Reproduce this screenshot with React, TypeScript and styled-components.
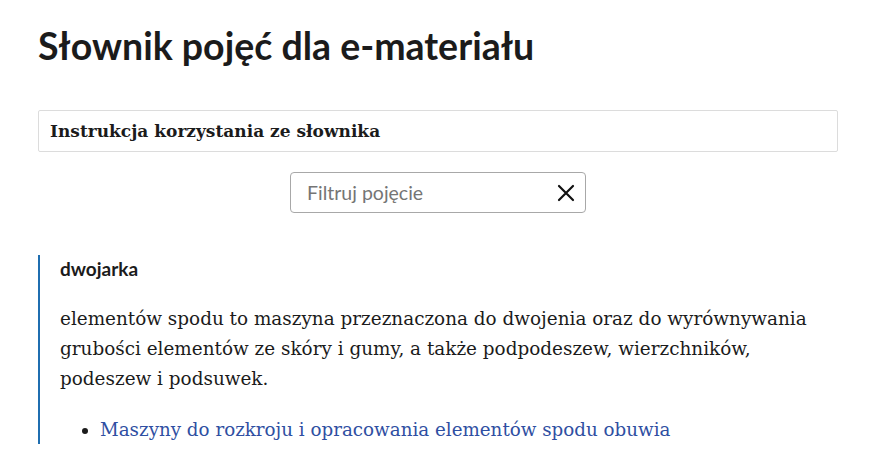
import styled, { createGlobalStyle } from "styled-components"

const GlobalStyle = createGlobalStyle`
  body {
    margin: 0;
    background: #fff;
    font-family: Lato, "Noto Sans", sans-serif;
    color: #1b1b1b;
  }
`

const Page = styled.div`
  width: 800px;
  padding: 20px 0 0 38px;
`

const Title = styled.h1`
  margin: 0;
  font-family: Lato, sans-serif;
  font-weight: 700;
  font-size: 37.5px;
  line-height: 52px;
  color: #1b1b1b;
`

const InstructionBar = styled.div`
  margin-top: 38px;
  height: 42px;
  box-sizing: border-box;
  border: 1px solid #dcdcdc;
  border-radius: 2px;
  display: flex;
  align-items: center;
  padding: 0 11px;
  font-family: "DejaVu Serif", serif;
  font-weight: 700;
  font-size: 17px;
  color: #1b1b1b;
`

const FilterRow = styled.div`
  display: flex;
  justify-content: center;
  margin-top: 20px;
`

const FilterBox = styled.label`
  width: 296px;
  height: 41px;
  box-sizing: border-box;
  border: 1px solid #a8a8a8;
  border-radius: 4px;
  display: flex;
  align-items: center;
  padding: 0 10px 0 16px;
`

const FilterInput = styled.input`
  flex: 1;
  min-width: 0;
  border: none;
  outline: none;
  font-family: Lato, sans-serif;
  font-size: 19.5px;
  color: #1b1b1b;
  padding: 0;
  &::placeholder {
    color: #757575;
  }
`

const ClearButton = styled.button`
  border: none;
  background: none;
  padding: 0;
  display: flex;
  cursor: pointer;
`

const Entry = styled.section`
  margin-top: 42px;
  border-left: 2px solid #1f6eb0;
  padding: 3px 0 0 20px;
  box-sizing: border-box;
`

const Term = styled.h3`
  margin: 0;
  font-family: Lato, sans-serif;
  font-weight: 700;
  font-size: 19px;
  line-height: 22px;
`

const Definition = styled.p`
  margin: 24px 0 0;
  font-family: "DejaVu Serif", serif;
  font-size: 18.4px;
  line-height: 30px;
  color: #1b1b1b;
`

const Links = styled.ul`
  margin: 22px 0 0;
  padding-left: 40px;
  font-family: "DejaVu Serif", serif;
  font-size: 18.3px;
  line-height: 28px;
`

const LinkItem = styled.li`
  &::marker {
    color: #1b1b1b;
  }
`

const Link = styled.a`
  color: #2f4fa2;
  text-decoration: none;
`

export default function App() {
  return (
    <>
      <GlobalStyle />
      <Page>
        <Title>Słownik pojęć dla e-materiału</Title>
        <InstructionBar>Instrukcja korzystania ze słownika</InstructionBar>
        <FilterRow>
          <FilterBox>
            <FilterInput placeholder="Filtruj pojęcie" />
            <ClearButton aria-label="Wyczyść">
              <svg width="18" height="18" viewBox="0 0 18 18">
                <path d="M2 2L16 16M16 2L2 16" stroke="#111" strokeWidth="2.2" strokeLinecap="round" />
              </svg>
            </ClearButton>
          </FilterBox>
        </FilterRow>
        <Entry>
          <Term>dwojarka</Term>
          <Definition>
            elementów spodu to maszyna przeznaczona do dwojenia oraz do wyrównywania grubości
            elementów ze skóry i gumy, a także podpodeszew, wierzchników, podeszew i podsuwek.
          </Definition>
          <Links>
            <LinkItem>
              <Link href="#">Maszyny do rozkroju i opracowania elementów spodu obuwia</Link>
            </LinkItem>
          </Links>
        </Entry>
      </Page>
    </>
  )
}
